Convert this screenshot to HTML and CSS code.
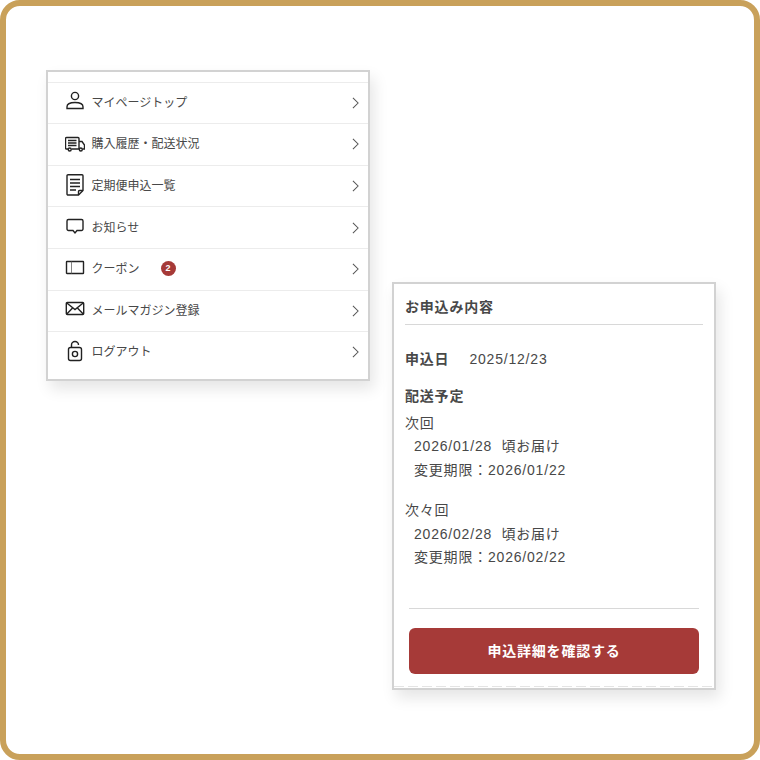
FILE: index.html
```html
<!DOCTYPE html>
<html lang="ja">
<head>
    <meta charset="UTF-8">
    <title>マイページ</title>
    <link rel="stylesheet" href="styles.css">
</head>
<body>
    <div class="frame">
        <div class="menu-panel">
            <a class="menu-row">
                <svg class="menu-icon" viewBox="0 0 20 22"><circle cx="10" cy="6" r="3.6"/><path d="M2 18.500v-1.700c0-2.600 3-4.300 8-4.300s8 1.700 8 4.300v1.700z"/></svg>
                <span>マイページトップ</span>
                <svg class="chev" viewBox="0 0 8 14"><path d="M1 1l6 6-6 6"/></svg>
            </a>
            <a class="menu-row">
                <svg class="menu-icon" viewBox="0 0 20 22"><path d="M3 17H1.500a1 1 0 0 1-1-1V6.500a1 1 0 0 1 1-1H13a1 1 0 0 1 1 1V17H6.500"/><path d="M14 9.500h3l2.500 3.500v4h-2M14 17h.5"/><circle cx="4.700" cy="17.500" r="1.500"/><circle cx="15.800" cy="17.500" r="1.500"/><path d="M3 8.500h8.500M3 11h8.500M3 13.500h8.500"/></svg>
                <span>購入履歴・配送状況</span>
                <svg class="chev" viewBox="0 0 8 14"><path d="M1 1l6 6-6 6"/></svg>
            </a>
            <a class="menu-row">
                <svg class="menu-icon" viewBox="0 0 20 22"><path d="M13.500 21H3a1 1 0 0 1-1-1V1.700a1 1 0 0 1 1-1h14a1 1 0 0 1 1 1V16.500z"/><path d="M13.500 21v-3.500a1 1 0 0 1 1-1H18"/><path d="M5 5.500h10M5 9h10M5 12.500h10M5 16h6"/></svg>
                <span>定期便申込一覧</span>
                <svg class="chev" viewBox="0 0 8 14"><path d="M1 1l6 6-6 6"/></svg>
            </a>
            <a class="menu-row">
                <svg class="menu-icon" viewBox="0 0 20 22"><path d="M3.500 4.500h13A1.500 1.500 0 0 1 18 6v8a1.500 1.500 0 0 1-1.500 1.500h-4.500L10 18l-2-2.500H3.500A1.500 1.500 0 0 1 2 14V6a1.500 1.500 0 0 1 1.500-1.500z"/></svg>
                <span>お知らせ</span>
                <svg class="chev" viewBox="0 0 8 14"><path d="M1 1l6 6-6 6"/></svg>
            </a>
            <a class="menu-row">
                <svg class="menu-icon" viewBox="0 0 20 22"><rect x="1.500" y="4.500" width="17" height="12" rx=".5"/><path class="thin" d="M6.500 4.500v12"/></svg>
                <span>クーポン</span>
                <span class="badge">2</span>
                <svg class="chev" viewBox="0 0 8 14"><path d="M1 1l6 6-6 6"/></svg>
            </a>
            <a class="menu-row">
                <svg class="menu-icon" viewBox="0 0 20 22"><rect x="1.300" y="4.500" width="17.400" height="12" rx="1"/><path d="M1.800 5l8.200 6.500L18.200 5M1.800 16l6-6.300M18.200 16l-6-6.300"/></svg>
                <span>メールマガジン登録</span>
                <svg class="chev" viewBox="0 0 8 14"><path d="M1 1l6 6-6 6"/></svg>
            </a>
            <a class="menu-row">
                <svg class="menu-icon" viewBox="0 0 20 22"><rect x="3.500" y="7.500" width="13" height="13" rx="2"/><circle cx="10" cy="14" r="2.600"/><path d="M6.500 7.500V5a3.500 3.500 0 0 1 7 0"/></svg>
                <span>ログアウト</span>
                <svg class="chev" viewBox="0 0 8 14"><path d="M1 1l6 6-6 6"/></svg>
            </a>
        </div>

        <div class="order-panel">
            <h2 class="order-title">お申込み内容</h2>
            <p class="order-date"><b>申込日</b><span>2025/12/23</span></p>
            <h3 class="order-sub">配送予定</h3>

            <div class="delivery">
                <p>次回</p>
                <p class="indent">2026/01/28&nbsp; 頃お届け</p>
                <p class="indent">変更期限：2026/01/22</p>
            </div>
            <div class="delivery">
                <p>次々回</p>
                <p class="indent">2026/02/28&nbsp; 頃お届け</p>
                <p class="indent">変更期限：2026/02/22</p>
            </div>

            <div class="order-foot">
                <a class="order-btn">申込詳細を確認する</a>
            </div>
        </div>
    </div>
</body>
</html>
```

FILE: styles.css
```css
body, h2, h3, p {
    margin: 0;
    padding: 0;
}

body {
    font-family: "Liberation Sans", "Noto Sans CJK JP", sans-serif;
    background-color: #fff;
    color: #484848;
}

.frame {
    box-sizing: border-box;
    width: 760px;
    height: 760px;
    padding: 64px 0 0 40px;
    border: 6px solid #c9a15a;
    border-radius: 20px;
    display: flex;
    align-items: flex-start;
    gap: 22px;
}

/* Menu panel */
.menu-panel {
    box-sizing: border-box;
    width: 324px;
    height: 311px;
    padding-top: 9.6px;
    background-color: #fff;
    border: 2px solid #d2d2d2;
    box-shadow: 4px 8px 14px rgba(0, 0, 0, 0.1);
}

.menu-row {
    box-sizing: border-box;
    height: 41.6px;
    padding: 0 9px 3px 17px;
    border-top: 1px solid #ececec;
    display: flex;
    align-items: center;
    font-size: 12px;
    color: #484848;
}

.menu-icon {
    width: 20px;
    height: 22px;
    margin-right: 6.6px;
    flex-shrink: 0;
    fill: none;
    stroke: #222;
    stroke-width: 1.4;
}

.menu-icon .thin {
    stroke: #666;
    stroke-width: 0.8;
}

.badge {
    width: 15px;
    height: 15px;
    margin: 1px 0 0 21px;
    border-radius: 50%;
    background-color: #a63a38;
    color: #fff;
    font-size: 9px;
    font-weight: bold;
    line-height: 15px;
    text-align: center;
}

.chev {
    width: 7px;
    height: 12px;
    margin: 3px 0 0 auto;
    fill: none;
    stroke: #555;
    stroke-width: 1.2;
}

/* Order panel */
.order-panel {
    box-sizing: border-box;
    width: 324px;
    height: 408px;
    margin-top: 212px;
    padding: 0 11px;
    background-color: #fff;
    border: 2px solid #d2d2d2;
    box-shadow: 4px 8px 14px rgba(0, 0, 0, 0.1);
    font-size: 14px;
    letter-spacing: 0.8px;
}

.order-title {
    height: 40px;
    font-size: 14px;
    line-height: 46px;
    border-bottom: 1px solid #d8d8d8;
}

.order-date {
    margin-top: 23px;
    line-height: 22px;
}

.order-date span {
    margin-left: 20px;
}

.order-sub {
    margin-top: 15px;
    font-size: 14px;
    line-height: 22px;
}

.delivery {
    margin-top: 4.5px;
    margin-bottom: 17px;
    line-height: 23.5px;
}

.delivery:last-of-type {
    margin-bottom: 0;
}

.indent {
    padding-left: 9px;
}

.order-foot {
    margin: 38px 4px 0;
    padding-top: 19px;
    border-top: 1px solid #d8d8d8;
}

.order-btn {
    display: block;
    height: 46px;
    border-radius: 6px;
    background-color: #a63a38;
    color: #fff;
    font-weight: bold;
    line-height: 46px;
    text-align: center;
}

.order-panel::after {
    content: "";
    display: block;
    height: 1px;
    margin: 12px -11px 0;
    background: repeating-linear-gradient(90deg, #e4e4e4 0 10px, #fff 10px 14px);
}
```
